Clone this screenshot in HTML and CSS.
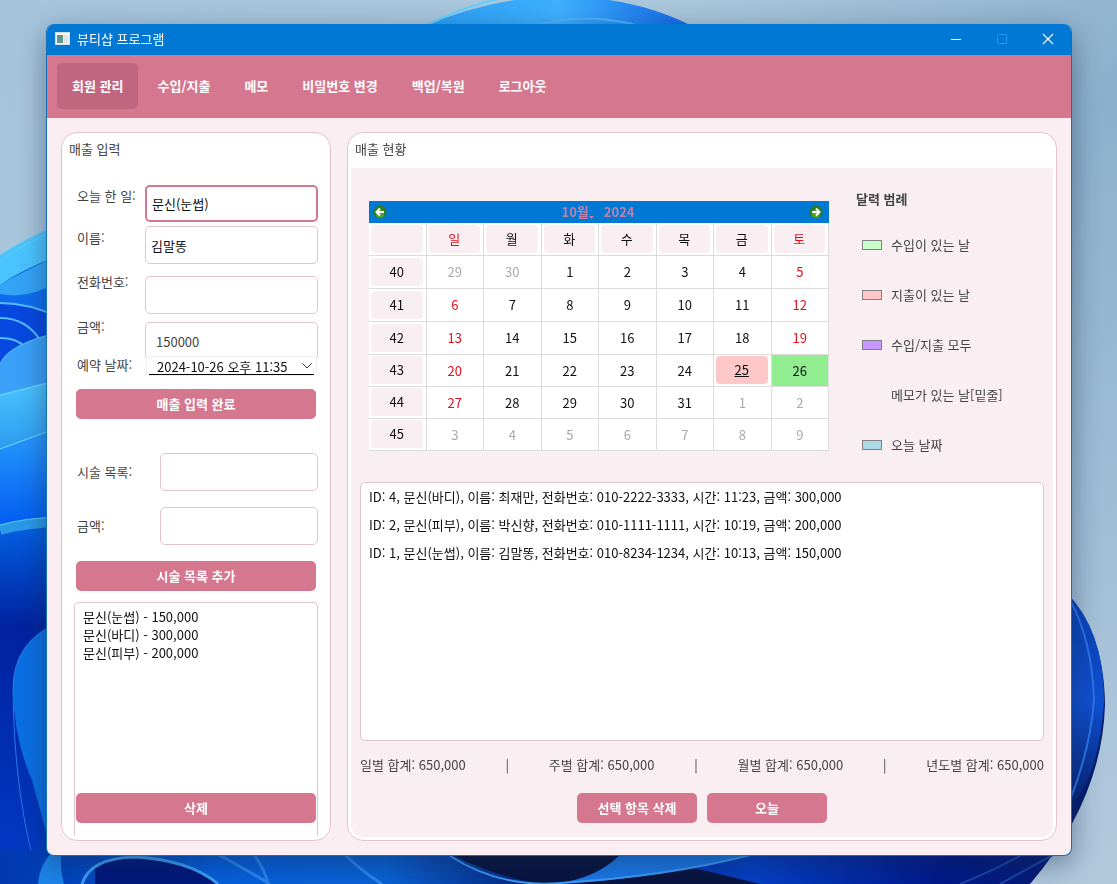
FILE: index.html
```html
<!DOCTYPE html>
<html lang="ko">
<head>
<meta charset="utf-8">
<title>뷰티샵 프로그램</title>
<link rel="stylesheet" href="styles.css">
</head>
<body>
<svg class="wallpaper" viewBox="0 0 1117 884" preserveAspectRatio="xMidYMid slice" aria-hidden="true">
  <defs>
    <linearGradient id="sky" x1="0" y1="0" x2="1" y2="1"><stop offset="0" stop-color="#a6c4dc"/><stop offset=".3" stop-color="#abc7db"/><stop offset=".55" stop-color="#8cb0cc"/><stop offset="1" stop-color="#b3cade"/></linearGradient>
    <linearGradient id="petal" x1="0" y1="0" x2="1" y2="0"><stop offset="0" stop-color="#28a0f5"/><stop offset=".5" stop-color="#3fb0ff"/><stop offset="1" stop-color="#1166e6"/></linearGradient>
    <linearGradient id="azure" x1="0" y1="0" x2="1" y2="1"><stop offset="0" stop-color="#39b4ff"/><stop offset="1" stop-color="#0450e0"/></linearGradient>
    <linearGradient id="cyan" x1="0" y1="0" x2="0" y2="1"><stop offset="0" stop-color="#4cc6ff"/><stop offset="1" stop-color="#2d9af0"/></linearGradient>
    <linearGradient id="royal" x1="0" y1="0" x2="0" y2="1"><stop offset="0" stop-color="#2a9cff"/><stop offset="1" stop-color="#005af0"/></linearGradient>
    <linearGradient id="deep" x1="0" y1="0" x2="0" y2="1"><stop offset="0" stop-color="#0566e8"/><stop offset=".3" stop-color="#0022a0"/><stop offset="1" stop-color="#003cc8"/></linearGradient>
    <linearGradient id="floor" x1="0" y1="0" x2="1" y2="0"><stop offset="0" stop-color="#0038b0"/><stop offset=".2" stop-color="#0560df"/><stop offset=".35" stop-color="#0a62d6"/><stop offset=".5" stop-color="#041c70"/><stop offset=".68" stop-color="#0440c8"/><stop offset=".85" stop-color="#00188c"/><stop offset="1" stop-color="#081d68"/></linearGradient>
    <linearGradient id="rim" x1="0" y1="0" x2="0" y2="1"><stop offset="0" stop-color="#0a3fb0"/><stop offset=".5" stop-color="#1050d0"/><stop offset="1" stop-color="#06206e"/></linearGradient>
  </defs>
  <rect width="1117" height="884" fill="url(#sky)"/>
  <path d="M425 26Q490-2 560-4Q635-3 692 26V60H425Z" fill="url(#petal)"/>
  <path d="M425 26Q480-2 530-6" fill="none" stroke="#62d0ff" stroke-width="2"/>
  <path d="M540 24Q590 12 640 26" fill="none" stroke="#4cb4f8" stroke-width="2"/>
  <path d="M0 255Q24 239 60 224V884H0Z" fill="url(#cyan)"/>
  <path d="M0 284Q20 270 60 254V330H0Z" fill="#0f6cf0"/>
  <path d="M0 284L60 254V280Q30 300 0 294Z" fill="#34a4f6"/>
  <path d="M0 262Q20 245 60 228M0 284Q20 270 60 254" fill="none" stroke="#5fd2fa" stroke-width="1"/>
  <path d="M0 303Q30 303 60 318V400H0Z" fill="#0648e0"/>
  <path d="M0 303Q30 303 60 318M0 318Q26 318 40 340M0 338Q16 338 24 346" fill="none" stroke="#55bcf8" stroke-width="2"/>
  <path d="M0 395V364Q8 344 60 332V395Z" fill="#3aa0f8"/>
  <path d="M0 364Q8 344 60 332" fill="none" stroke="#63c4fa" stroke-width="1"/>
  <path d="M0 395L60 379V440L0 450Z" fill="url(#cyan)"/>
  <path d="M0 449L60 427V530H0Z" fill="url(#royal)"/>
  <path d="M0 395L60 380M0 449L60 427" fill="none" stroke="#6fe0f4" stroke-width="1"/>
  <path d="M0 524Q26 518 60 516V884H0Z" fill="url(#deep)"/>
  <path d="M0 530Q24 523 60 522" fill="none" stroke="#2a9ae8" stroke-width="10"/>
  <path d="M0 525Q24 518 60 517" fill="none" stroke="#58cdf4" stroke-width="1"/>
  <path d="M60 622Q13 640 13 690Q14 740 32 780L60 884Z" fill="#0b6fe4"/>
  <path d="M60 622Q13 640 13 690Q14 800 40 884" fill="none" stroke="#2b78ea" stroke-width="1"/>
  <path d="M1060 590Q1104 625 1105 705Q1102 800 1030 884H0V850H1060Z" fill="url(#floor)"/>
  <path d="M1066 592Q1104 630 1104 700Q1100 778 1066 812Z" fill="url(#rim)"/>
  <path d="M1070 600Q1092 640 1094 700Q1090 750 1070 800" fill="none" stroke="#2b74e8" stroke-width="2"/>
  <path d="M210 850Q240 866 270 884M250 850Q264 866 268 884M340 850Q360 870 382 884" fill="none" stroke="#2c86f0" stroke-width="3"/>
  <path d="M38 884Q40 862 55 850H62Q59 866 64 884Z" fill="#1c84e8"/>
  <path d="M95 884V866Q110 857 135 857Q190 860 218 884Z" fill="#00187c"/>
  <path d="M82 884Q90 858 135 857Q190 860 218 884" fill="none" stroke="#3ba0f4" stroke-width="3"/>
  <path d="M450 854Q510 884 560 884H760Q690 866 620 854Z" fill="#081440"/>
  <path d="M560 884Q660 878 750 855H620Q590 884 540 884Z" fill="#1a78e8"/>
  <path d="M450 856Q500 888 560 883Q670 876 750 855" fill="none" stroke="#3c9cf4" stroke-width="2"/>
  <path d="M960 884Q1000 868 1030 850M1000 884Q1040 862 1062 850" fill="none" stroke="#1846a8" stroke-width="2"/>
</svg>

<div class="window">
  <header class="titlebar">
    <svg class="app-icon" viewBox="0 0 16 14" aria-hidden="true"><rect x=".5" y=".5" width="14" height="12" fill="#f4f6f6" stroke="#d5dde4"/><rect x="2" y="3" width="6" height="8" fill="#5c9a84"/><rect x="2" y="3" width="2" height="8" fill="#6a8cb0"/><rect x="9" y="3" width="4" height="8" fill="#dfe3e6"/></svg>
    <h1 class="app-title">뷰티샵 프로그램</h1>
    <button class="win-btn" type="button" aria-label="최소화"><svg viewBox="0 0 12 12"><path d="M1 6.5H11" stroke="#fff"/></svg></button>
    <button class="win-btn" type="button" aria-label="최대화" disabled><svg viewBox="0 0 12 12"><rect x="1.5" y="1.5" width="9" height="9" rx="1" fill="none" stroke="#2c97ee"/></svg></button>
    <button class="win-btn" type="button" aria-label="닫기"><svg viewBox="0 0 12 12"><path d="M1 1L11 11M11 1L1 11" stroke="#fff" stroke-width="1.2"/></svg></button>
  </header>

  <nav class="menu">
    <button class="menu-item active" type="button">회원 관리</button>
    <button class="menu-item" type="button">수입/지출</button>
    <button class="menu-item" type="button">메모</button>
    <button class="menu-item" type="button">비밀번호 변경</button>
    <button class="menu-item" type="button">백업/복원</button>
    <button class="menu-item" type="button">로그아웃</button>
  </nav>

  <main class="content">
    <section class="panel entry">
      <h2 class="panel-title">매출 입력</h2>
      <form class="sale-form">
        <div class="sale-labels">
          <label for="work">오늘 한 일:</label>
          <label for="name">이름:</label>
          <label for="phone">전화번호:</label>
          <label for="amount">금액:</label>
          <label for="date">예약 날짜:</label>
        </div>
        <div class="sale-fields">
          <input class="field focused" id="work" type="text" value="문신(눈썹)">
          <input class="field" id="name" type="text" value="김말똥">
          <input class="field" id="phone" type="text">
          <input class="field amount" id="amount" type="text" value="150000">
          <div class="date-wrap">
            <select class="date" id="date"><option>2024-10-26 오후 11:35</option></select>
            <svg class="chevron" viewBox="0 0 10 6" aria-hidden="true"><path d="M.5 .5L5 5L9.500 .5" fill="none" stroke="#333"/></svg>
          </div>
        </div>
      </form>
      <button class="btn wide" type="button">매출 입력 완료</button>
      <form class="service-form">
        <label for="service">시술 목록:</label>
        <input class="field" id="service" type="text">
        <label for="price">금액:</label>
        <input class="field" id="price" type="text">
      </form>
      <button class="btn wide" type="button">시술 목록 추가</button>
      <div class="service-box">
        <ul class="service-list">
          <li>문신(눈썹) - 150,000</li>
          <li>문신(바디) - 300,000</li>
          <li>문신(피부) - 200,000</li>
        </ul>
        <button class="btn remove" type="button">삭제</button>
      </div>
    </section>

    <section class="panel status">
      <h2 class="panel-title">매출 현황</h2>
      <div class="board">
        <div class="overview">
          <div class="calendar">
            <div class="cal-bar">
              <button class="cal-nav" type="button" aria-label="이전 달"><svg viewBox="0 0 14 14"><circle cx="7" cy="7" r="6.500" fill="#2c7d22"/><circle cx="7" cy="9" r="4" fill="#4aa52e"/><path d="M7 3.500L3.500 7L7 10.500M4 7H11" fill="none" stroke="#fff" stroke-width="2"/></svg></button>
              <div class="cal-caption"><button class="cal-month" type="button">10월<svg class="caret" viewBox="0 0 5 3" aria-hidden="true"><path d="M0 0H5L2.500 3Z" fill="#d4778f"/></svg></button><span>2024</span></div>
              <button class="cal-nav" type="button" aria-label="다음 달"><svg viewBox="0 0 14 14"><circle cx="7" cy="7" r="6.500" fill="#2c7d22"/><circle cx="7" cy="9" r="4" fill="#4aa52e"/><path d="M7 3.500L10.500 7L7 10.500M10 7H3" fill="none" stroke="#fff" stroke-width="2"/></svg></button>
            </div>
            <table class="cal-grid">
              <thead>
                <tr><td><span class="tile"></span></td><th scope="col" class="red"><span class="tile">일</span></th><th scope="col"><span class="tile">월</span></th><th scope="col"><span class="tile">화</span></th><th scope="col"><span class="tile">수</span></th><th scope="col"><span class="tile">목</span></th><th scope="col"><span class="tile">금</span></th><th scope="col" class="red"><span class="tile">토</span></th></tr>
              </thead>
              <tbody>
                <tr class="tall"><th scope="row"><span class="tile">40</span></th><td class="out">29</td><td class="out">30</td><td>1</td><td>2</td><td>3</td><td>4</td><td class="red">5</td></tr>
                <tr class="tall"><th scope="row"><span class="tile">41</span></th><td class="red">6</td><td>7</td><td>8</td><td>9</td><td>10</td><td>11</td><td class="red">12</td></tr>
                <tr class="tall"><th scope="row"><span class="tile">42</span></th><td class="red">13</td><td>14</td><td>15</td><td>16</td><td>17</td><td>18</td><td class="red">19</td></tr>
                <tr><th scope="row"><span class="tile">43</span></th><td class="red">20</td><td>21</td><td>22</td><td>23</td><td>24</td><td><span class="tile spent">25</span></td><td class="today">26</td></tr>
                <tr><th scope="row"><span class="tile">44</span></th><td class="red">27</td><td>28</td><td>29</td><td>30</td><td>31</td><td class="out">1</td><td class="out">2</td></tr>
                <tr><th scope="row"><span class="tile">45</span></th><td class="out">3</td><td class="out">4</td><td class="out">5</td><td class="out">6</td><td class="out">7</td><td class="out">8</td><td class="out">9</td></tr>
              </tbody>
            </table>
          </div>
          <aside class="legend">
            <h3 class="legend-title">달력 범례</h3>
            <ul class="legend-list">
              <li><span class="swatch income"></span>수입이 있는 날</li>
              <li><span class="swatch expense"></span>지출이 있는 날</li>
              <li><span class="swatch both"></span>수입/지출 모두</li>
              <li><span class="swatch none"></span>메모가 있는 날[밑줄]</li>
              <li><span class="swatch now"></span>오늘 날짜</li>
            </ul>
          </aside>
        </div>
        <ul class="records">
          <li>ID: 4, 문신(바디), 이름: 최재만, 전화번호: 010-2222-3333, 시간: 11:23, 금액: 300,000</li>
          <li>ID: 2, 문신(피부), 이름: 박신향, 전화번호: 010-1111-1111, 시간: 10:19, 금액: 200,000</li>
          <li>ID: 1, 문신(눈썹), 이름: 김말똥, 전화번호: 010-8234-1234, 시간: 10:13, 금액: 150,000</li>
        </ul>
        <div class="totals">
          <span>일별 합계: 650,000</span><span>|</span>
          <span>주별 합계: 650,000</span><span>|</span>
          <span>월별 합계: 650,000</span><span>|</span>
          <span>년도별 합계: 650,000</span>
        </div>
        <div class="actions">
          <button class="btn" type="button">선택 항목 삭제</button>
          <button class="btn" type="button">오늘</button>
        </div>
      </div>
    </section>
  </main>
</div>
</body>
</html>
```
FILE: styles.css
```css
* { box-sizing: border-box; }

body {
  margin: 0;
  min-height: 100vh;
  display: flex;
  padding: 24px 45px 28px 46px;
  font: 13px/20px "Noto Sans CJK KR", "Noto Sans", sans-serif;
  color: #111;
}

h1, h2, h3, ul { margin: 0; padding: 0; font-size: 13px; font-weight: 400; list-style: none; }
button, input, select { font: inherit; color: inherit; }
button { border: 0; padding: 0; background: none; }

.wallpaper { position: fixed; inset: 0; width: 100%; height: 100%; z-index: -1; }

.window {
  flex: 1;
  display: flex;
  flex-direction: column;
  border: 1px solid #1470b8;
  border-top: 0;
  border-radius: 8px;
  overflow: hidden;
  background: #faeef2;
  box-shadow: 0 8px 28px rgba(20, 40, 70, .45);
}

.titlebar { display: flex; align-items: center; height: 31px; padding: 0 0 1px 8px; background: #0078d4; color: #fff; }
.app-icon { width: 16px; height: 14px; margin-right: 6px; }
.app-title { flex: 1; }
.win-btn { display: flex; align-items: center; justify-content: center; width: 46px; height: 30px; }
.win-btn svg { width: 12px; height: 12px; }

.menu { display: flex; gap: 4px; padding: 8px 10px 9px; background: #d4778f; }
.menu-item { height: 46px; padding: 0 15px; border-radius: 5px; color: #fff; font-weight: 700; }
.menu-item.active { background: #c16680; }

.content { flex: 1; display: flex; gap: 16px; padding: 14px; }
.panel { display: flex; flex-direction: column; border: 1px solid #e3c3ce; border-radius: 16px; background: #fff; }
.panel-title { padding: 6px 7px 0; color: #444; }

.entry { width: 270px; }
.entry label { color: #444; }
.sale-form { display: flex; margin: 26px 12px 14px; }
.sale-labels { width: 71px; padding: 1px 0 0 3px; display: grid; grid-template-rows: 42px 44px 45px 38px 20px; }
.sale-fields { flex: 1; min-width: 0; }
.field { display: block; width: 100%; height: 38px; padding: 0 5px; border: 1px solid #e3c3ce; border-radius: 5px; background: #fff; outline: 0; }
.field.focused { height: 37px; border: 2px solid #d4778f; margin-bottom: 4px; }
#name { margin-bottom: 12px; }
#phone { margin-bottom: 8px; }
.field.amount { padding-left: 10px; color: #444; }
.date-wrap { position: relative; margin: -3px 2px 0; padding: 1px 2px 0; border-radius: 4px 4px 0 0; background: #fff; box-shadow: 0 0 0 1px #f4eef0; }
.date { display: block; width: 100%; height: 17px; padding: 0 0 0 8px; appearance: none; border: 0; border-bottom: 1px solid #000; border-radius: 0; background: #fff; line-height: 15px; }
.chevron { position: absolute; right: 4px; top: 6px; width: 10px; height: 6px; }

.btn { height: 30px; border-radius: 5px; background: #d4778f; color: #fff; font-weight: 700; }
.wide { margin: 0 14px; }
.service-form { display: grid; grid-template-columns: 83px 1fr; row-gap: 16px; align-items: center; margin: 34px 12px 16px 15px; }
.service-box { flex: 1; display: flex; flex-direction: column; margin: 11px 12px 4px; padding: 0 1px 13px; border: 1px solid #e3c3ce; border-bottom: 0; border-radius: 5px 5px 0 0; }
.service-list { padding: 5px 7px; line-height: 18px; }
.remove { margin-top: auto; }

.status { flex: 1; min-width: 0; padding: 0 3px 3px; }
.status .panel-title { padding: 6px 4px 0; }
.board { flex: 1; display: flex; flex-direction: column; margin-top: 9px; padding: 21px 9px 14px; border-radius: 0 0 12px 12px; background: #f9eff3; }
.overview { display: flex; gap: 27px; padding-left: 9px; margin-bottom: 27px; }
.calendar { flex: 1; padding-top: 12px; }
.cal-bar { display: flex; align-items: center; justify-content: space-between; height: 22px; padding: 0 6px 0 4px; background: #0078d4; }
.cal-nav, .cal-nav svg { display: block; width: 14px; height: 14px; }
.cal-caption { display: flex; gap: 10px; color: #bf81ac; font-weight: 700; }
.cal-month { display: flex; align-items: flex-end; }
.caret { width: 5px; height: 3px; margin-bottom: 3px; }

.cal-grid { width: 100%; table-layout: fixed; border-collapse: separate; border-spacing: 0; background: #fff; text-align: center; }
.cal-grid th, .cal-grid td { height: 32px; padding: 0; border: solid #dcdcdc; border-width: 0 1px 1px 0; font-weight: 400; }
.cal-grid thead td, .cal-grid thead th, .cal-grid .tall th, .cal-grid .tall td { height: 33px; }
.tile { display: block; height: 28px; margin: 1px 3px 2px 2px; border-radius: 4px; background: #f9eff3; line-height: 28px; }
.red { color: #e0101c; }
.out { color: #aaa; }
.spent { background: #ffc8c8; text-decoration: underline; }
.cal-grid .today { background: #90ee90; }

.legend { width: 188px; color: #444; }
.legend-title { font-weight: 700; }
.legend-list { display: grid; gap: 30px; padding: 26px 0 0 6px; }
.legend-list li { display: flex; align-items: center; gap: 9px; }
.swatch { width: 20px; height: 10px; border: 1px solid #808080; }
.income { background: #c8ffc8; }
.expense { background: #ffc8c8; }
.both { background: #c896ff; }
.none { border-color: transparent; }
.now { background: #add8e6; }

.records { flex: 1; padding: 0 8px; border: 1px solid #e3c3ce; border-radius: 5px; background: #fff; line-height: 28px; }
.totals { display: flex; justify-content: space-between; margin: 14px 0 18px; color: #444; }
.actions { display: flex; justify-content: center; gap: 10px; }
.actions .btn { width: 120px; }
```
